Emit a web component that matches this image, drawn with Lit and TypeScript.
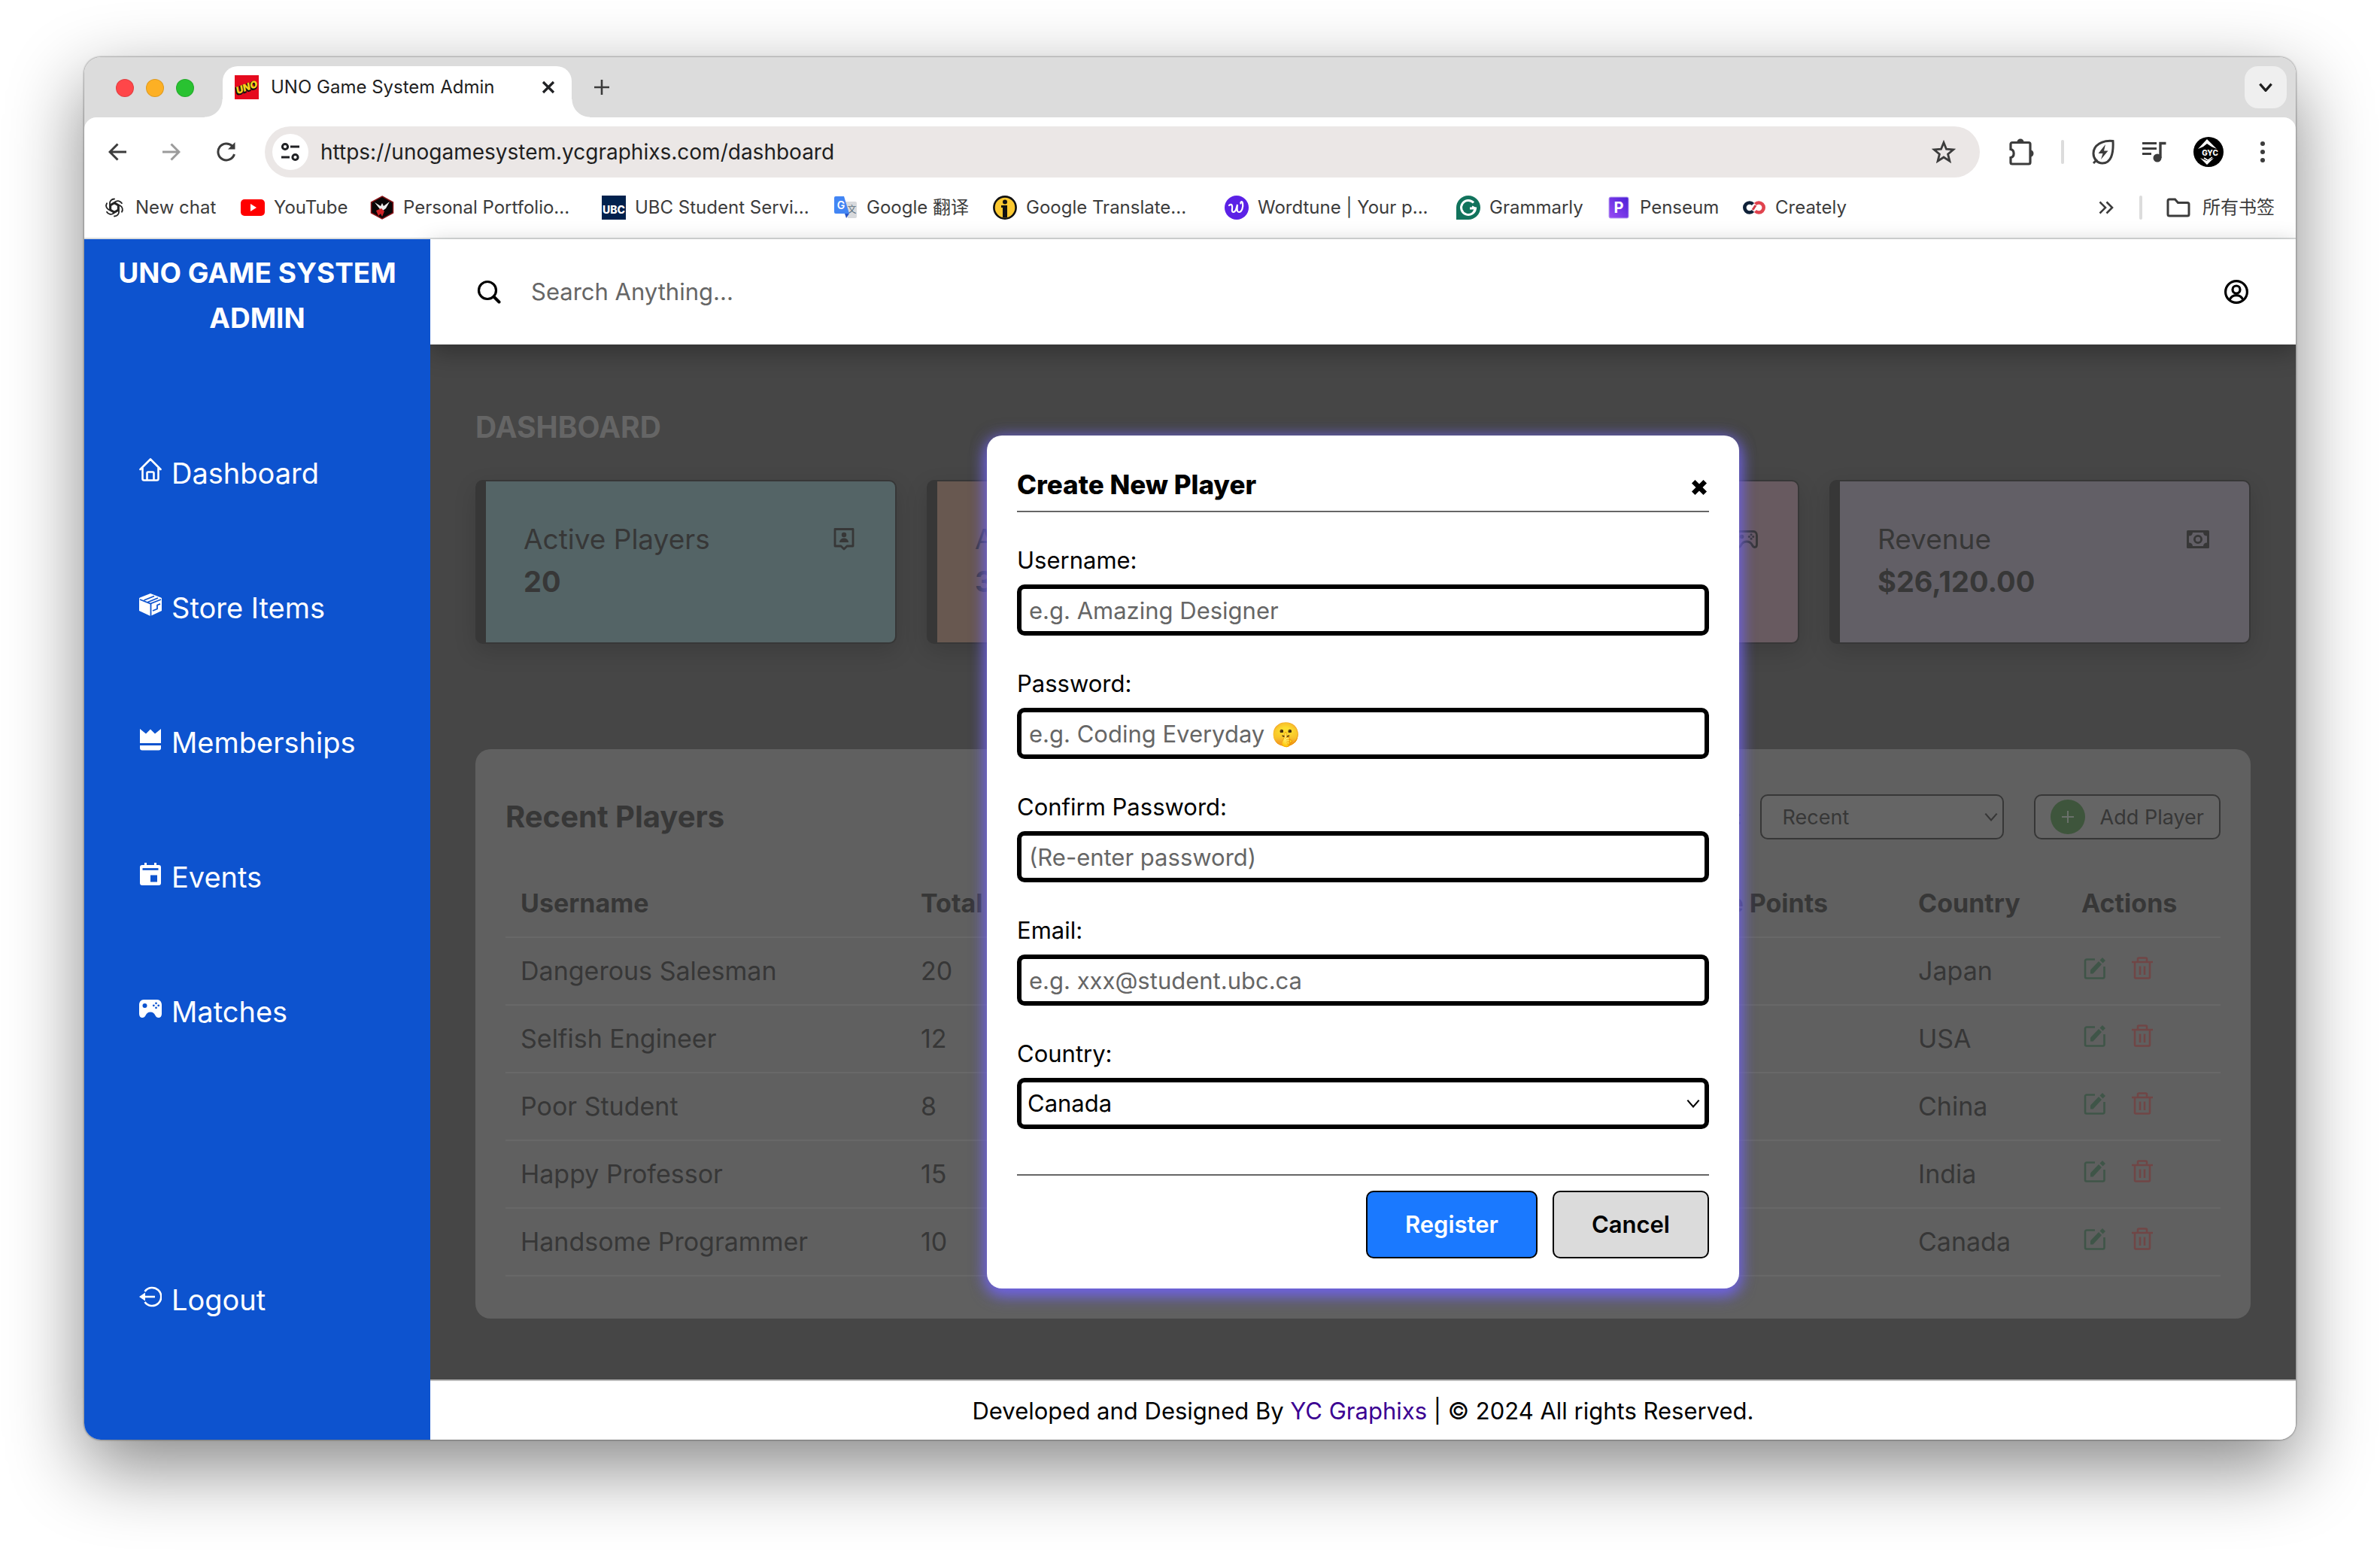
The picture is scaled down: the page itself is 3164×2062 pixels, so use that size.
import { LitElement, html, css, svg, nothing, type TemplateResult } from 'lit';
import { customElement, state } from 'lit/decorators.js';

/* ---------- icons ---------- */

const icon = (w: number, h: number, body: TemplateResult, box = `0 0 ${w} ${h}`) =>
  html`<svg class="icon" width=${w} height=${h} viewBox=${box} fill="none" aria-hidden="true">${body}</svg>`;

const chevron = (w: number, h: number, stroke = 2) =>
  icon(w, h, svg`<path d="M1 1.5l7 8 7-8" stroke="currentColor" stroke-width=${stroke}/>`, '0 0 16 11');

const icons = {
  close: icon(18, 18, svg`<path d="M2 2l14 14M16 2L2 16" stroke="#202124" stroke-width="3.2"/>`),
  plus: icon(20, 20, svg`<path d="M10 0v20M0 10h20" stroke="#3c3c3c" stroke-width="2.6"/>`),
  back: icon(24, 24, svg`<path d="M24 12H2M12.5 1.5L2 12l10.500 10.500" stroke="#3c3c3c" stroke-width="3"/>`),
  forward: icon(24, 24, svg`<path d="M0 12h22M11.500 1.500L22 12 11.500 22.500" stroke="#9b9b9b" stroke-width="3"/>`),
  reload: icon(26, 26, svg`<path d="M23.500 16a11 11 0 1 1-2.700-10.800L23 7.500" stroke="#3c3c3c" stroke-width="3"/><path d="M24.500 0v9.500H15z" fill="#3c3c3c"/>`),
  tune: icon(26, 26, svg`<g stroke="#202124" stroke-width="3"><circle cx="6" cy="6" r="3.600"/><path d="M13 6h12M1 20h11"/><circle cx="19.500" cy="20" r="3.600"/></g>`),
  star: icon(32, 32, svg`<path d="M16 3.500l3.500 8.700 9.300.7-7.200 6 2.300 9.200L16 23l-7.900 5.100 2.300-9.200-7.200-6 9.300-.7z" stroke="#3c3c3c" stroke-width="2.800"/>`),
  puzzle: icon(34, 36, svg`<path d="M3 7.500a2 2 0 0 1 2-2h22a2 2 0 0 1 2 2V32a2 2 0 0 1-2 2H5a2 2 0 0 1-2-2v-6.500c5.500-1 5.500-10 0-11z" stroke="#3c3c3c" stroke-width="3.200"/><path d="M11.500 4.500a4.500 4 0 0 1 9 0zM29.500 15.500a4 4.500 0 0 1 0 9z" fill="#3c3c3c"/>`),
  leaf: icon(32, 36, svg`<path d="M29 3.500C15 2 3 9 3 20c0 7 5 13 12 13 11 0 15-12 14-29.500zM8 28l-5 5" stroke="#3c3c3c" stroke-width="3"/><path d="M19 8L9.500 20h6L13 28l9.500-11.500H17z" fill="#3c3c3c"/>`),
  music: icon(32, 30, svg`<path d="M0 3.500h19M0 10.500h19M0 17.500h12" stroke="#3c3c3c" stroke-width="3"/><circle cx="20" cy="23" r="5.500" fill="#3c3c3c"/><path d="M24 23V3.500h7.500" stroke="#3c3c3c" stroke-width="3.400"/>`),
  avatar: icon(40, 40, svg`<circle cx="20" cy="20" r="20" fill="#000"/><path d="M18 3L6 16l7-3 5-4 6 4 7 3zM18 37l9-9-9 4-9-4z" fill="#fff"/><path d="M14 28l5 3 6-4" stroke="#fff" stroke-width="1.500"/><text x="22" y="25" text-anchor="middle" font-family="Inter, sans-serif" font-weight="800" font-size="10" fill="#fff">GYC</text>`),
  more: icon(8, 32, svg`<g fill="#3c3c3c"><circle cx="4" cy="5" r="3"/><circle cx="4" cy="16" r="3"/><circle cx="4" cy="27" r="3"/></g>`),
  overflow: icon(20, 18, svg`<path d="M1.500 1.500L9 9l-7.500 7.500M10.500 1.500L18 9l-7.500 7.500" stroke="#3c3c3c" stroke-width="2.600"/>`),
  folder: icon(32, 26, svg`<path d="M2 4a2 2 0 0 1 2-2h7.500l4 4.500H28a2 2 0 0 1 2 2V22a2 2 0 0 1-2 2H4a2 2 0 0 1-2-2z" stroke="#3c3c3c" stroke-width="3"/>`),
  uno: icon(32, 32, svg`<rect width="32" height="32" fill="#e50a1e"/><g transform="rotate(-20 16 16)" font-family="Inter, sans-serif" font-weight="900" font-style="italic" font-size="13" text-anchor="middle"><text x="15" y="21.500" fill="#111" stroke="#111" stroke-width="2">UNO</text><text x="16" y="20.500" fill="#f6d21c">UNO</text></g>`),

  search: icon(32, 32, svg`<circle cx="14" cy="14" r="11.500" stroke="#000" stroke-width="3.200"/><path d="M22.500 22.500l7 7" stroke="#000" stroke-width="4" stroke-linecap="round"/>`),
  user: icon(32, 32, svg`<g stroke="#000" stroke-width="3.200"><circle cx="16" cy="16" r="14.400"/><circle cx="16" cy="13" r="5"/><path d="M7 27a9.500 9.500 0 0 1 18 0"/></g>`),
  house: icon(30, 32, svg`<path d="M1.500 15L15 1.500 28.500 15M4.500 13v14.500a2 2 0 0 0 2 2h17a2 2 0 0 0 2-2V13M10.500 29V20a1.500 1.500 0 0 1 1.500-1.500h6a1.500 1.500 0 0 1 1.500 1.500v9" stroke="#fff" stroke-width="2.600" stroke-linejoin="round" stroke-linecap="round"/>`),
  box: icon(30, 30, svg`<path d="M15 0l14 5.500a1.500 1.500 0 0 1 1 1.500v16l-15 7-15-7V7a1.500 1.500 0 0 1 1-1.500z" fill="#fff"/><path d="M1 8l14 5.500L29 8M6.500 9l13.500-5.500M11.500 11.500L25 6" stroke="#0d53cf" stroke-width="1.800"/><path d="M15.500 13.500V30M18 23l6-2.500v-5l4-1.700" stroke="#0d53cf" stroke-width="1.800"/>`),
  crown: icon(28, 30, svg`<path d="M0 1l8 6.500L14 1.500l6 6L28 1v19H0zM0 23h28v3.500a3 3 0 0 1-3 3H3a3 3 0 0 1-3-3z" fill="currentColor"/>`),
  calendar: icon(28, 30, svg`<path d="M6 0h3v3h10V0h3v3h3a3 3 0 0 1 3 3v21a3 3 0 0 1-3 3H3a3 3 0 0 1-3-3V6a3 3 0 0 1 3-3h3z" fill="#fff"/><path d="M3.500 8.500h21" stroke="#0d53cf" stroke-width="2.800"/><path d="M14 16.500h9v9h-9z" fill="#0d53cf"/>`),
  gamepad: icon(30, 24, svg`<path d="M6 0h18c3.500 0 6 3 6 7v12c0 3-1.800 5-4.200 5-2 0-3.300-1-4.500-3.200C20 18.300 18.500 16.500 15 16.500s-5 1.800-6.300 4.300C7.500 23 6.200 24 4.200 24 1.800 24 0 22 0 19V7c0-4 2.500-7 6-7z" fill="#fff"/><circle cx="7.500" cy="8" r="3" fill="#0d53cf"/><g fill="#0d53cf"><circle cx="22.500" cy="4.800" r="1.400"/><circle cx="22.500" cy="10.800" r="1.400"/><circle cx="19.300" cy="7.800" r="1.400"/><circle cx="25.700" cy="7.800" r="1.400"/></g>`),
  logout: icon(30, 28, svg`<path d="M7.500 7A12 12 0 1 1 7.500 21" stroke="#fff" stroke-width="2.600"/><path d="M7 14h14" stroke="#fff" stroke-width="2.600"/><path d="M0 14l8-5.500v11z" fill="#fff"/>`),

  badge: icon(28, 30, svg`<path d="M2 1.500h24v22.500h-8l-4 4-4-4H2z" stroke="#373737" stroke-width="2.800" stroke-linejoin="round"/><circle cx="14" cy="9" r="3.200" fill="#373737"/><path d="M8 19c0-3.500 3-5.500 6-5.500s6 2 6 5.500z" fill="#373737"/>`),
  pad: icon(30, 24, svg`<path d="M6 1.500h18c2.500 0 4.500 2 4.500 5.500v12c0 2-1 3.500-2.700 3.500-1.500 0-2.500-1-3.500-3C21 17 18.500 15 15 15s-6 2-7.300 4.500c-1 2-2 3-3.500 3-1.700 0-2.700-1.500-2.700-3.500V7c0-3.500 2-5.500 4.500-5.500z" stroke="#373737" stroke-width="2.800"/><circle cx="8.500" cy="8.500" r="2.800" fill="#373737"/><g fill="#373737"><circle cx="21" cy="5.800" r="1.500"/><circle cx="21" cy="11.200" r="1.500"/><circle cx="18.300" cy="8.500" r="1.500"/><circle cx="23.700" cy="8.500" r="1.500"/></g>`),
  money: icon(30, 24, svg`<rect width="30" height="24" rx="1.500" fill="#373737"/><path d="M8 3h14a5 5 0 0 0 5 4.500v9a5 5 0 0 0-5 4.500H8a5 5 0 0 0-5-4.500v-9A5 5 0 0 0 8 3z" fill="#625f66"/><circle cx="15" cy="12" r="4.600" stroke="#373737" stroke-width="2.800"/>`),
  cross: icon(22, 22, svg`<path d="M5.500 5.500l11 11M16.500 5.500l-11 11" stroke="#000" stroke-width="6.400" stroke-linecap="square"/>`),
  edit: icon(30, 30, svg`<path d="M15 3.500H4a2 2 0 0 0-2 2v21a2 2 0 0 0 2 2h21.500a2 2 0 0 0 2-2V13" stroke="#3f5548" stroke-width="2.600"/><path d="M9 17.500L20 6l4 4-11.500 12.500H9z" fill="#3f5548"/><path d="M21.500 4.500L25 1l4 4-3.500 3.500z" fill="#3f5548"/>`),
  trash: icon(28, 30, svg`<path d="M0 7h28M8 6.500V3a1.500 1.500 0 0 1 1.500-1.500h9A1.500 1.500 0 0 1 20 3v3.500M4 7.500V27a1.500 1.500 0 0 0 1.500 1.500h17A1.500 1.500 0 0 0 24 27V7.500M11 12.500v11.500M17 12.500v11.500" stroke="#704646" stroke-width="2.600"/>`),
  addPlus: icon(16, 16, svg`<path d="M8 0v16M0 8h16" stroke="#6a706a" stroke-width="2"/>`),
};

const bookmarkIcons = {
  chat: icon(26, 28, svg`<g stroke="#222" stroke-width="1.800" stroke-linecap="round"><path id="petal" d="M13 2.500c-4 0-6 3-6 5.500v8l6 3.500"/>${[60, 120, 180, 240, 300].map((a) => svg`<path d="M13 2.500c-4 0-6 3-6 5.500v8l6 3.500" transform="rotate(${a} 13 14)"/>`)}</g>`),
  youtube: icon(32, 22, svg`<rect width="32" height="22" rx="5" fill="#f00"/><path d="M13 6v10l8-5z" fill="#fff"/>`),
  phoenix: icon(32, 32, svg`<path d="M16 1l14.500 8v14L16 31 1.500 23V9z" fill="#0a0607" stroke="#8a1418" stroke-width="1.500"/><path d="M6 9l8 5 2-4 2 4 8-6-5 9-4 3-4-2z" fill="#eee"/><path d="M8 20l7-3 4 4-3 7-2-4-3 3z" fill="#d02428"/>`),
  ubc: icon(32, 32, svg`<rect width="32" height="32" fill="#01214d"/><text x="16" y="24" text-anchor="middle" font-family="Inter, sans-serif" font-weight="800" font-size="14" fill="#fff">UBC</text>`),
  gtranslate: icon(30, 32, svg`<path d="M12 8h16a2 2 0 0 1 2 2v18a2 2 0 0 1-2 2H18z" fill="#d8dadd"/><text x="23.500" y="23" text-anchor="middle" font-family="'Noto Sans CJK SC', sans-serif" font-size="12" fill="#5b7080">文</text><path d="M2 1h11l7 23H2a2 2 0 0 1-2-2V3a2 2 0 0 1 2-2z" fill="#4285f4"/><path d="M14 24h6l-4 6z" fill="#2a56c6"/><text x="9" y="18" text-anchor="middle" font-family="Inter, sans-serif" font-weight="600" font-size="14" fill="#fff">G</text>`),
  info: icon(32, 32, svg`<circle cx="16" cy="16" r="14.600" fill="#fcc931" stroke="#111" stroke-width="2.600"/><circle cx="16" cy="8.500" r="3" fill="#111"/><path d="M11 13h8v16h-6V16h-2z" fill="#111"/>`),
  wordtune: icon(32, 32, svg`<circle cx="16" cy="16" r="16" fill="#5b21e6"/><path d="M6 13c3-3 5 0 4 5-1 5 3 5 5 1l2-7c-1 8 0 10 2 10 4 0 6-7 5-12-.5-3-3-2-2.500.5" stroke="#fff" stroke-width="2.200" stroke-linecap="round"/>`),
  grammarly: icon(32, 32, svg`<path d="M0 16a16 16 0 1 1 16 16H0z" fill="#11735c"/><path d="M23 9.500A9.500 9.500 0 1 0 25.500 17H18" stroke="#fff" stroke-width="3"/><path d="M21 14.500l4.500 2.500-3 5" stroke="#fff" stroke-width="2.200"/>`),
  penseum: icon(28, 30, svg`<defs><linearGradient id="pg" x1="1" y1="0" x2="0" y2="1"><stop stop-color="#4a1fd6"/><stop offset="1" stop-color="#9a4bf5"/></linearGradient></defs><rect x="1" y="1" width="26" height="28" rx="2" fill="url(#pg)" stroke="#b9a4f0"/><text x="14" y="22" text-anchor="middle" font-family="Inter, sans-serif" font-weight="700" font-size="20" fill="#fff">P</text>`),
  creately: icon(32, 20, svg`<path d="M14.500 5.500a6.500 6.500 0 1 0 0 9" stroke="#0f2138" stroke-width="4.600"/><path d="M14 13l4-6" stroke="#d33a45" stroke-width="3"/><path d="M17.500 5.500a6.500 6.500 0 1 1 0 9" stroke="#e0434e" stroke-width="4.600"/>`),
};

/* ---------- data ---------- */

const bookmarks: [TemplateResult, string][] = [
  [bookmarkIcons.chat, 'New chat'],
  [bookmarkIcons.youtube, 'YouTube'],
  [bookmarkIcons.phoenix, 'Personal Portfolio...'],
  [bookmarkIcons.ubc, 'UBC Student Servi...'],
  [bookmarkIcons.gtranslate, 'Google 翻译'],
  [bookmarkIcons.info, 'Google Translate...'],
  [bookmarkIcons.wordtune, 'Wordtune | Your p...'],
  [bookmarkIcons.grammarly, 'Grammarly'],
  [bookmarkIcons.penseum, 'Penseum'],
  [bookmarkIcons.creately, 'Creately'],
];

const navItems: [TemplateResult, string][] = [
  [icons.house, 'Dashboard'],
  [icons.box, 'Store Items'],
  [icons.crown, 'Memberships'],
  [icons.calendar, 'Events'],
  [icons.gamepad, 'Matches'],
];

const stats = [
  { tone: 'teal', label: 'Active Players', value: '20', icon: icons.badge },
  { tone: 'brown', label: 'Active Members', value: '3', icon: icons.crown },
  { tone: 'rose', label: 'Matches', value: '12', icon: icons.pad },
  { tone: 'violet', label: 'Revenue', value: '$26,120.00', icon: icons.money },
];

const players: [string, number, string][] = [
  ['Dangerous Salesman', 20, 'Japan'],
  ['Selfish Engineer', 12, 'USA'],
  ['Poor Student', 8, 'China'],
  ['Happy Professor', 15, 'India'],
  ['Handsome Programmer', 10, 'Canada'],
];

const fields: [string, string, string, string][] = [
  ['username', 'Username:', 'text', 'e.g. Amazing Designer'],
  ['password', 'Password:', 'password', 'e.g. Coding Everyday 🤫'],
  ['confirm', 'Confirm Password:', 'password', '(Re-enter password)'],
  ['email', 'Email:', 'email', 'e.g. xxx@student.ubc.ca'],
];

const base = css`
  :host, *, *::before, *::after { box-sizing: border-box; }
  h1, h2, p, ul { margin: 0; padding: 0; }
  button, input, select { font: inherit; color: inherit; margin: 0; }
  button { background: none; border: 0; padding: 0; cursor: pointer; }
  a { color: inherit; text-decoration: none; }
  .icon { display: block; flex: none; }
`;

/* ---------- browser chrome ---------- */

@customElement('browser-chrome')
export class BrowserChrome extends LitElement {
  static styles = [base, css`
    :host { display: block; color: #1f1f1f; background: #dcdcdc; font-size: 24px; line-height: 32px; }
    .strip { display: flex; height: 80px; padding: 12px 12px 0 42px; }
    .lights { display: flex; gap: 16px; padding-top: 17px; width: 142px; }
    .light { width: 24px; height: 24px; border-radius: 50%; border: 1px solid rgba(0, 0, 0, .12); }
    .red { background: #ff4649; } .amber { background: #fdb024; } .green { background: #29c231; }
    .tab { position: relative; display: flex; align-items: center; gap: 16px; width: 464px; height: 68px; padding: 0 22px 12px 16px; background: #fff; border-radius: 20px 20px 0 0; }
    .tab::before, .tab::after { content: ''; position: absolute; bottom: 0; width: 24px; height: 24px; }
    .tab::before { right: 100%; background: radial-gradient(circle at 0 0, transparent 23px, #fff 24px); }
    .tab::after { left: 100%; background: radial-gradient(circle at 100% 0, transparent 23px, #fff 24px); }
    .title { flex: 1; white-space: nowrap; }
    .new { display: grid; place-items: center; width: 80px; height: 56px; }
    .list { display: grid; place-items: center; width: 56px; height: 56px; margin-left: auto; border-radius: 18px; background: #efefef; }
    .bar { display: flex; align-items: center; height: 80px; padding: 12px 40px 0 32px; background: #fff; border-radius: 16px 16px 0 0; }
    .history { display: flex; gap: 48px; align-items: center; width: 208px; }
    .omni { display: flex; align-items: center; flex: 1; gap: 16px; height: 68px; padding: 0 32px 0 10px; border-radius: 34px; background: #ebe7e6; }
    .site { display: grid; place-items: center; width: 48px; height: 48px; border-radius: 50%; background: #fff; }
    .url { flex: 1; min-width: 0; height: 40px; padding: 0; border: 0; outline: 0; background: none; font-size: 28px; }
    .tools { display: flex; align-items: center; gap: 36px; margin-left: 38px; }
    .menu { margin-left: 12px; }
    .split { width: 4px; height: 32px; border-radius: 2px; background: #dcdcdc; }
    .marks { display: flex; align-items: center; height: 82px; padding: 0 28px 0 24px; color: #3c3c3c; background: #fff; border-bottom: 2px solid #dadcdc; }
    .links { display: grid; grid-template-columns: 184px 172px 308px 308px 212px 308px 308px 200px 180px auto; flex: 1; justify-content: start; }
    .mark { display: flex; align-items: center; gap: 12px; white-space: nowrap; }
    .glyph { display: grid; place-items: center; width: 32px; height: 32px; }
    .all { display: flex; align-items: center; gap: 16px; }
    .rest { display: flex; align-items: center; gap: 32px; }
    .rest .split { margin-left: 2px; }
  `];

  render() {
    return html`
      <div class="strip">
        <div class="lights"><span class="light red"></span><span class="light amber"></span><span class="light green"></span></div>
        <div class="tab">${icons.uno}<span class="title">UNO Game System Admin</span><button aria-label="Close tab">${icons.close}</button></div>
        <button class="new" aria-label="New tab">${icons.plus}</button>
        <button class="list" aria-label="Search tabs">${chevron(18, 12, 3)}</button>
      </div>
      <div class="bar">
        <div class="history">
          <button aria-label="Back">${icons.back}</button>
          <button aria-label="Forward">${icons.forward}</button>
          <button aria-label="Reload">${icons.reload}</button>
        </div>
        <div class="omni">
          <button class="site" aria-label="Site information">${icons.tune}</button>
          <input class="url" aria-label="Address" value="https://unogamesystem.ycgraphixs.com/dashboard" />
          <button aria-label="Bookmark this page">${icons.star}</button>
        </div>
        <div class="tools">
          <button aria-label="Extensions">${icons.puzzle}</button>
          <span class="split"></span>
          <button aria-label="Energy saver">${icons.leaf}</button>
          <button aria-label="Media">${icons.music}</button>
          <button aria-label="Profile">${icons.avatar}</button>
          <button class="menu" aria-label="Menu">${icons.more}</button>
        </div>
      </div>
      <div class="marks">
        <nav class="links">
          ${bookmarks.map(([i, t]) => html`<a class="mark" href="#"><span class="glyph">${i}</span>${t}</a>`)}
        </nav>
        <div class="rest">
          <button aria-label="More bookmarks">${icons.overflow}</button>
          <span class="split"></span>
          <a class="all" href="#">${icons.folder}所有书签</a>
        </div>
      </div>`;
  }
}

/* ---------- sidebar ---------- */

@customElement('side-nav')
export class SideNav extends LitElement {
  static styles = [base, css`
    :host { position: relative; z-index: 3; display: flex; flex-direction: column; width: 460px; padding: 15px 0 156px; color: #fff; background: #0d53cf; font-size: 38px; line-height: 60px; }
    .brand { padding: 0 36px; font-size: 37px; line-height: 60px; font-weight: 700; text-align: center; }
    .menu { display: flex; flex-direction: column; gap: 119px; margin: 146px 0 auto; list-style: none; }
    .item { display: flex; align-items: center; gap: 12px; padding-left: 72px; }
    .pic { display: grid; place-items: center; width: 32px; height: 44px; align-self: start; padding-top: 8px; }
  `];

  private item([i, t]: [TemplateResult, string]) {
    return html`<a class="item" href="#"><span class="pic">${i}</span>${t}</a>`;
  }

  render() {
    return html`
      <h1 class="brand">UNO GAME SYSTEM ADMIN</h1>
      <ul class="menu">${navItems.map((n) => html`<li>${this.item(n)}</li>`)}</ul>
      ${this.item([icons.logout, 'Logout'])}`;
  }
}

/* ---------- dashboard ---------- */

@customElement('dash-board')
export class DashBoard extends LitElement {
  static styles = [base, css`
    :host { display: block; flex: 1; padding: 80px 60px; color: #373737; }
    .heading { margin-bottom: 40px; color: #656565; font-size: 39px; line-height: 60px; font-weight: 700; }
    .cards { display: grid; grid-template-columns: repeat(4, 1fr); gap: 40px; }
    .card { display: flex; justify-content: space-between; padding: 49px 52px 53px 50px; border: 2px solid #373737; border-left-width: 14px; border-radius: 10px; box-shadow: 0 10px 30px rgba(0, 0, 0, .14); line-height: 56px; }
    .teal { background: #546466; } .brown { background: #685850; } .rose { background: #685a60; } .violet { background: #625f66; }
    .label { font-size: 37px; }
    .value { font-size: 38px; font-weight: 700; }
    .pic { display: grid; place-items: center; width: 32px; height: 56px; }
    .panel { margin-top: 140px; padding: 60px 40px 56px; border-radius: 20px; background: #606060; }
    .top { display: flex; align-items: center; height: 60px; margin-bottom: 40px; font-size: 27px; }
    .name { margin-right: auto; font-size: 40px; line-height: 60px; font-weight: 700; }
    .pick { position: relative; display: flex; align-items: center; width: 324px; margin: 0 40px 0 24px; }
    .sort { appearance: none; width: 100%; height: 60px; padding: 0 28px; border: 2px solid #373737; border-radius: 10px; background: #656565; }
    .pick .icon { position: absolute; right: 8px; pointer-events: none; }
    .add { display: flex; align-items: center; gap: 20px; height: 60px; padding: 0 20px; border: 2px solid #373737; border-radius: 10px; background: #656565; }
    .dot { display: grid; place-items: center; width: 46px; height: 46px; border-radius: 50%; background: #3e553c; }
    .table { width: 100%; border-collapse: collapse; table-layout: fixed; font-size: 34px; line-height: 50px; }
    .c1 { width: 532px; } .c2 { width: 260px; } .c5 { width: 217px; } .c6 { width: 205px; }
    th, td { height: 90px; padding: 0 20px; border-bottom: 2px solid #686868; text-align: left; }
    th { font-weight: 700; }
    .points { text-align: right; padding-right: 100px; }
    .acts { display: flex; align-items: center; gap: 34px; padding: 0 0 8px 3px; }
  `];

  render() {
    return html`
      <h2 class="heading">DASHBOARD</h2>
      <div class="cards">
        ${stats.map((s) => html`
          <article class="card ${s.tone}">
            <div><p class="label">${s.label}</p><p class="value">${s.value}</p></div>
            <span class="pic">${s.icon}</span>
          </article>`)}
      </div>
      <section class="panel">
        <div class="top">
          <h2 class="name">Recent Players</h2>
          <label for="sort">Sort By:</label>
          <span class="pick">
            <select id="sort" class="sort"><option>Recent</option></select>
            ${chevron(18, 12, 2)}
          </span>
          <button class="add"><span class="dot">${icons.addPlus}</span>Add Player</button>
        </div>
        <table class="table">
          <colgroup><col class="c1" /><col class="c2" /><col /><col class="c5" /><col class="c6" /></colgroup>
          <thead>
            <tr><th>Username</th><th>Total</th><th class="points">Average Points</th><th>Country</th><th>Actions</th></tr>
          </thead>
          <tbody>
            ${players.map(([name, total, country]) => html`
              <tr>
                <td>${name}</td><td>${total}</td><td></td><td>${country}</td>
                <td><div class="acts">
                  <button aria-label="Edit ${name}">${icons.edit}</button>
                  <button aria-label="Delete ${name}">${icons.trash}</button>
                </div></td>
              </tr>`)}
          </tbody>
        </table>
      </section>`;
  }
}

/* ---------- dialog ---------- */

@customElement('player-dialog')
export class PlayerDialog extends LitElement {
  static styles = [base, css`
    :host { display: block; width: 1000px; max-width: 100%; padding: 40px; border-radius: 20px; color: #000; background: #fff; box-shadow: 0 8px 20px 2px #6f63e6, 0 0 20px rgba(111, 99, 230, .5); font-size: 31px; line-height: 48px; }
    .head { display: flex; align-items: center; justify-content: space-between; padding: 0 2px 10px 0; border-bottom: 2px solid #666; }
    .title { font-size: 35px; line-height: 50px; font-weight: 800; }
    .close { padding-top: 8px; }
    .form { display: flex; flex-direction: column; gap: 40px; padding: 40px 0 60px; }
    .field { display: flex; flex-direction: column; gap: 8px; }
    .input { width: 100%; height: 68px; padding: 0 10px; border: 6px solid #000; border-radius: 10px; outline: 0; background: #fff; }
    .input::placeholder { color: #666; opacity: 1; }
    .wrap { position: relative; display: flex; align-items: center; }
    .wrap .input { appearance: none; padding: 0 8px; }
    .wrap .icon { position: absolute; right: 12px; pointer-events: none; }
    .foot { display: flex; justify-content: flex-end; gap: 20px; padding-top: 20px; border-top: 2px solid #666; }
    .btn { height: 90px; padding: 0 50px; border: 2px solid #000; border-radius: 10px; font-weight: 600; }
    .ok { color: #fff; background: #1a79ff; }
    .no { background: #dbdbdb; }
  `];

  private dismiss() {
    this.dispatchEvent(new CustomEvent('dismiss'));
  }

  render() {
    return html`
      <div class="head">
        <h2 class="title">Create New Player</h2>
        <button class="close" aria-label="Close" @click=${this.dismiss}>${icons.cross}</button>
      </div>
      <div class="form">
        ${fields.map(([id, label, type, hint]) => html`
          <div class="field">
            <label for=${id}>${label}</label>
            <input id=${id} class="input" type=${type} placeholder=${hint} />
          </div>`)}
        <div class="field">
          <label for="country">Country:</label>
          <span class="wrap">
            <select id="country" class="input"><option>Canada</option><option>China</option><option>India</option><option>Japan</option><option>USA</option></select>
            ${chevron(18, 12, 2)}
          </span>
        </div>
      </div>
      <div class="foot">
        <button class="btn ok">Register</button>
        <button class="btn no" @click=${this.dismiss}>Cancel</button>
      </div>`;
  }
}

/* ---------- page ---------- */

@customElement('app-root')
export class AppRoot extends LitElement {
  @state() private open = true;

  static styles = [base, css`
    :host { display: flex; min-height: 100vh; padding: 76px 112px 148px; background: #fff; font-family: Inter, 'Noto Sans CJK SC', sans-serif; }
    .window { display: flex; flex-direction: column; flex: 1; min-width: 0; overflow: hidden; border-radius: 22px; box-shadow: 0 0 2px 1px rgba(0, 0, 0, .3), 0 36px 100px rgba(0, 0, 0, .48); }
    .app { display: flex; flex: 1; }
    .page { display: flex; flex-direction: column; flex: 1; min-width: 0; }
    .header { position: relative; z-index: 2; display: flex; align-items: center; height: 140px; padding: 0 63px 0 62px; background: #fff; box-shadow: 0 10px 30px rgba(0, 0, 0, .3); }
    .search { flex: 1; height: 60px; margin: 0 40px 2px 40px; padding: 0; border: 0; outline: 0; font-size: 31px; }
    .search::placeholder { color: #666; opacity: 1; }
    .main { position: relative; display: flex; flex: 1; background: #464646; }
    .veil { position: absolute; inset: 0; display: flex; align-items: center; justify-content: center; }
    .footer { height: 80px; border-top: 2px solid #bbb; background: #fff; font-size: 31px; line-height: 80px; text-align: center; }
    .credit { color: #3b0092; }
  `];

  render() {
    return html`
      <div class="window">
        <browser-chrome></browser-chrome>
        <div class="app">
          <side-nav></side-nav>
          <div class="page">
            <header class="header">
              ${icons.search}
              <input class="search" type="search" aria-label="Search" placeholder="Search Anything..." />
              <button aria-label="Account">${icons.user}</button>
            </header>
            <main class="main">
              <dash-board></dash-board>
              ${this.open
                ? html`<div class="veil"><player-dialog role="dialog" aria-label="Create New Player" @dismiss=${() => (this.open = false)}></player-dialog></div>`
                : nothing}
            </main>
            <footer class="footer">Developed and Designed By <a class="credit" href="#">YC Graphixs</a> | © 2024 All rights Reserved.</footer>
          </div>
        </div>
      </div>`;
  }
}
